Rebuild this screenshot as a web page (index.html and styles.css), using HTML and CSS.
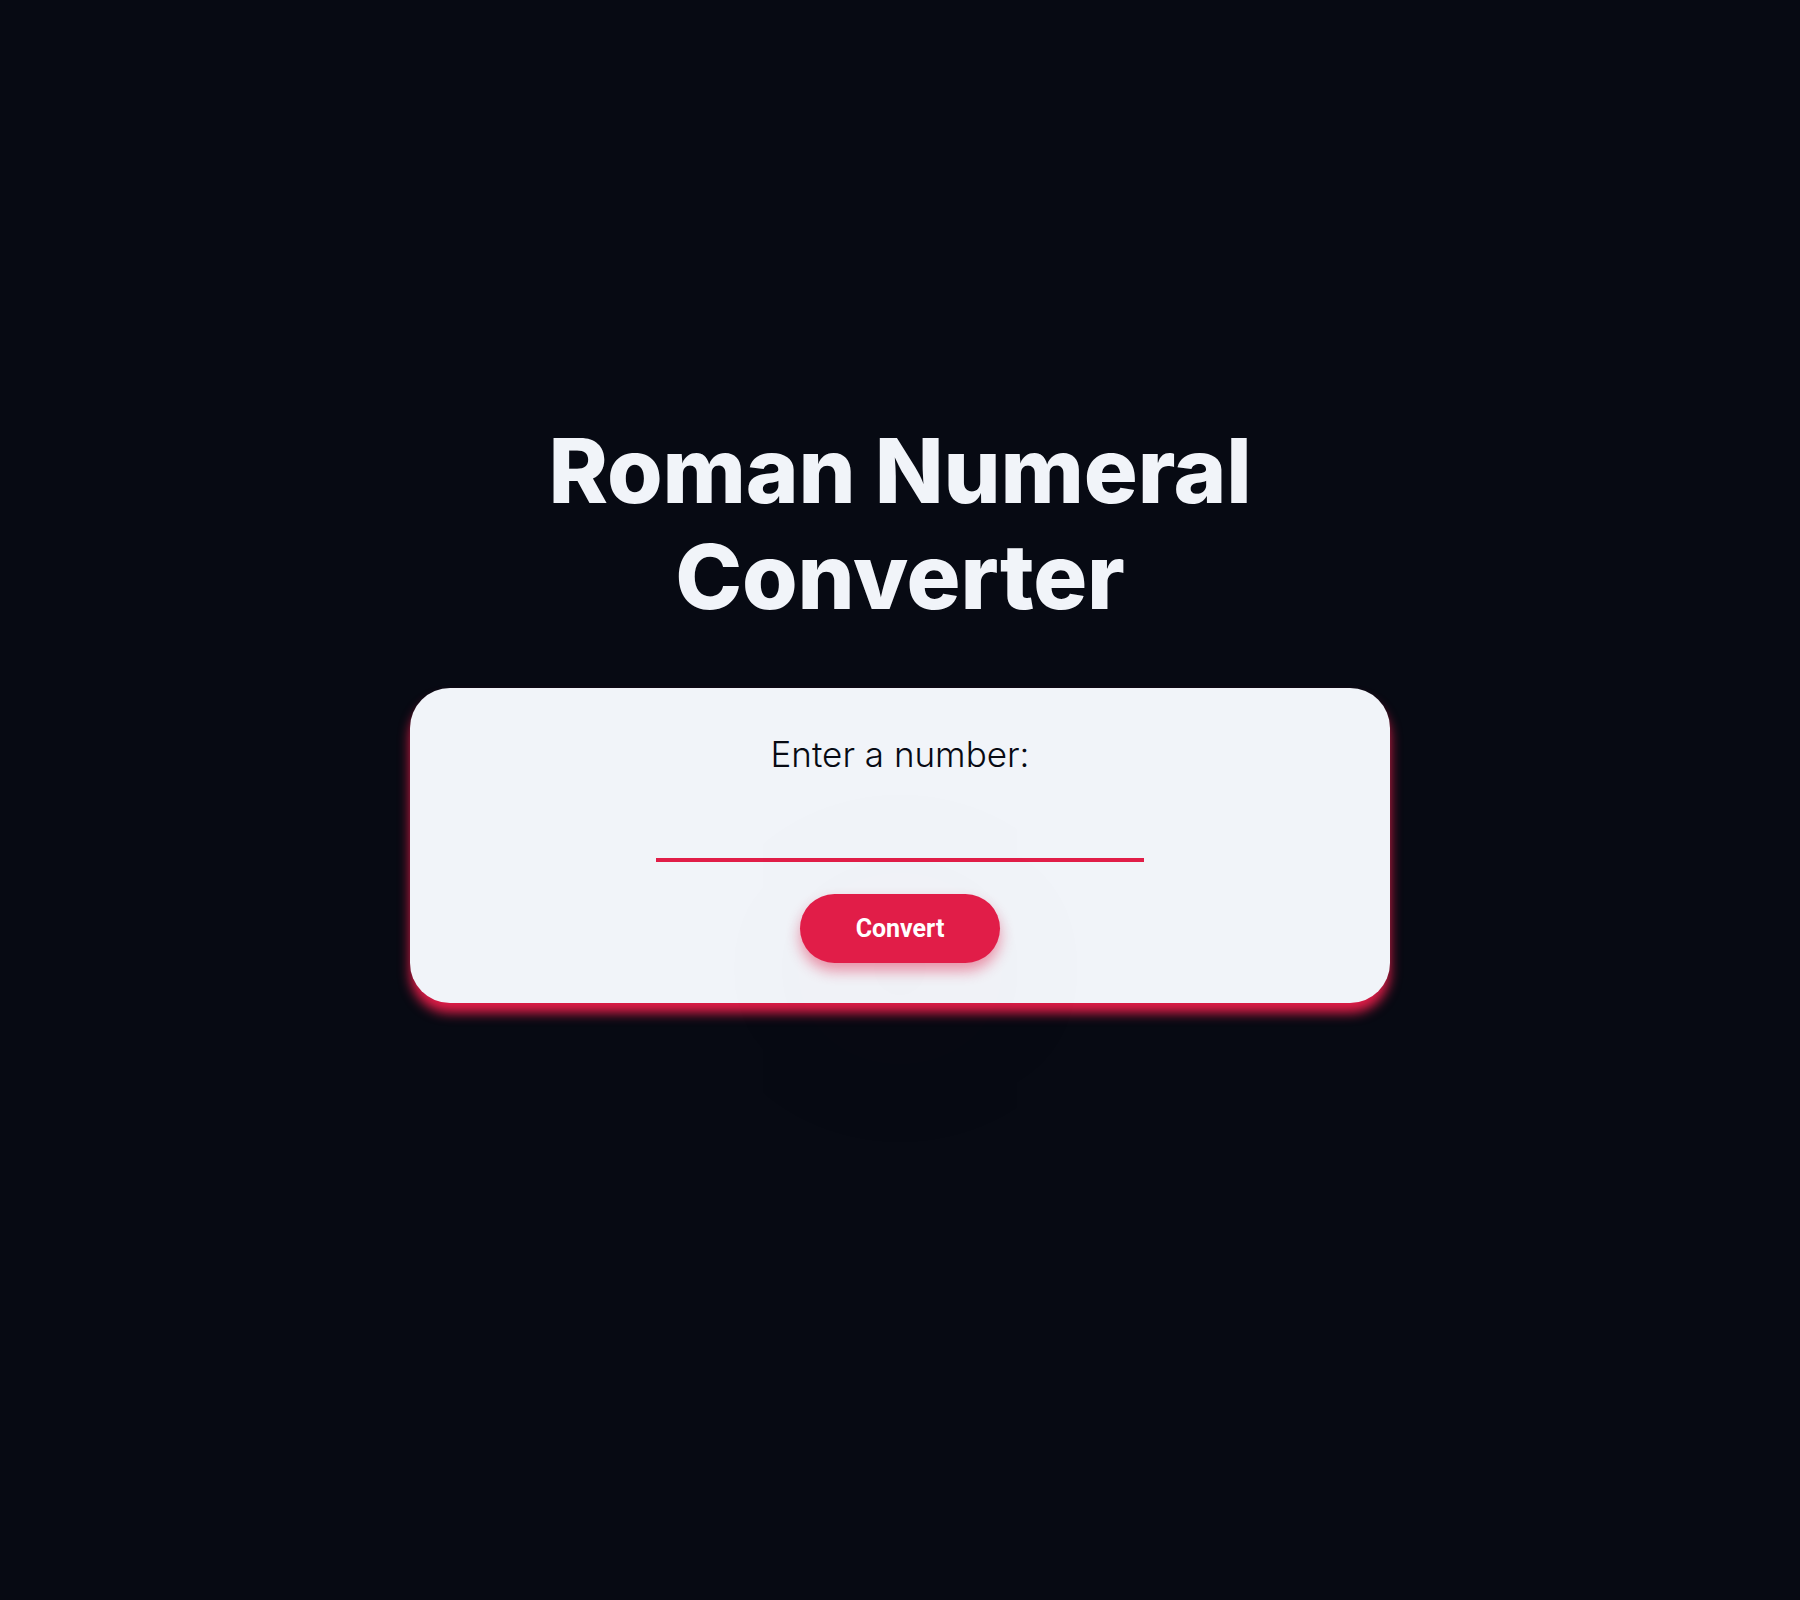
FILE: index.html
```html
<!DOCTYPE html>
<html lang="en">
<head>
<meta charset="utf-8">
<title>Roman Numeral Converter</title>
<link rel="stylesheet" href="styles.css">
</head>
<body>
<main class="page">
  <h1 class="title">Roman Numeral<br>Converter</h1>
  <form class="card">
    <label class="label" for="number">Enter a number:</label>
    <input class="field" id="number" type="number">
    <button class="btn" type="button">Convert</button>
  </form>
</main>
</body>
</html>
```
FILE: styles.css
```css
html, body {
  margin: 0;
  padding: 0;
  background: #070a13;
}
body {
  min-height: 1600px;
  font-family: Inter, "Noto Sans", sans-serif;
}
.page {
  display: flex;
  flex-direction: column;
  align-items: center;
  padding-top: 418px;
}
.title {
  margin: 0;
  color: #f1f4f9;
  font-family: Inter, sans-serif;
  font-weight: 800;
  font-size: 90px;
  line-height: 106px;
  text-align: center;
  letter-spacing: -0.2px;
}
.card {
  margin-top: 58px;
  width: 980px;
  box-sizing: border-box;
  height: 315px;
  background: #f1f4f9;
  border-radius: 40px;
  box-shadow: 0 10px 12px #e11d48;
  display: flex;
  flex-direction: column;
  align-items: center;
  padding-top: 44px;
}
.label {
  font-family: Inter, sans-serif;
  font-weight: 300;
  font-size: 35px;
  line-height: 44px;
  color: #070a13;
}
.field {
  margin-top: 46px;
  width: 488px;
  height: 40px;
  box-sizing: border-box;
  border: none;
  border-bottom: 4px solid #e11d48;
  background: transparent;
  outline: none;
}
.btn {
  margin-top: 32px;
  width: 200px;
  height: 69px;
  border: none;
  border-radius: 35px;
  background: #e11d48;
  color: #ffffff;
  font-family: Roboto, sans-serif;
  font-weight: 700;
  font-size: 25px;
  letter-spacing: 0;
  box-shadow: 0 8px 14px rgba(225, 29, 72, 0.45), 0 40px 220px rgba(120, 20, 60, 0.08);
  cursor: pointer;
}
```
